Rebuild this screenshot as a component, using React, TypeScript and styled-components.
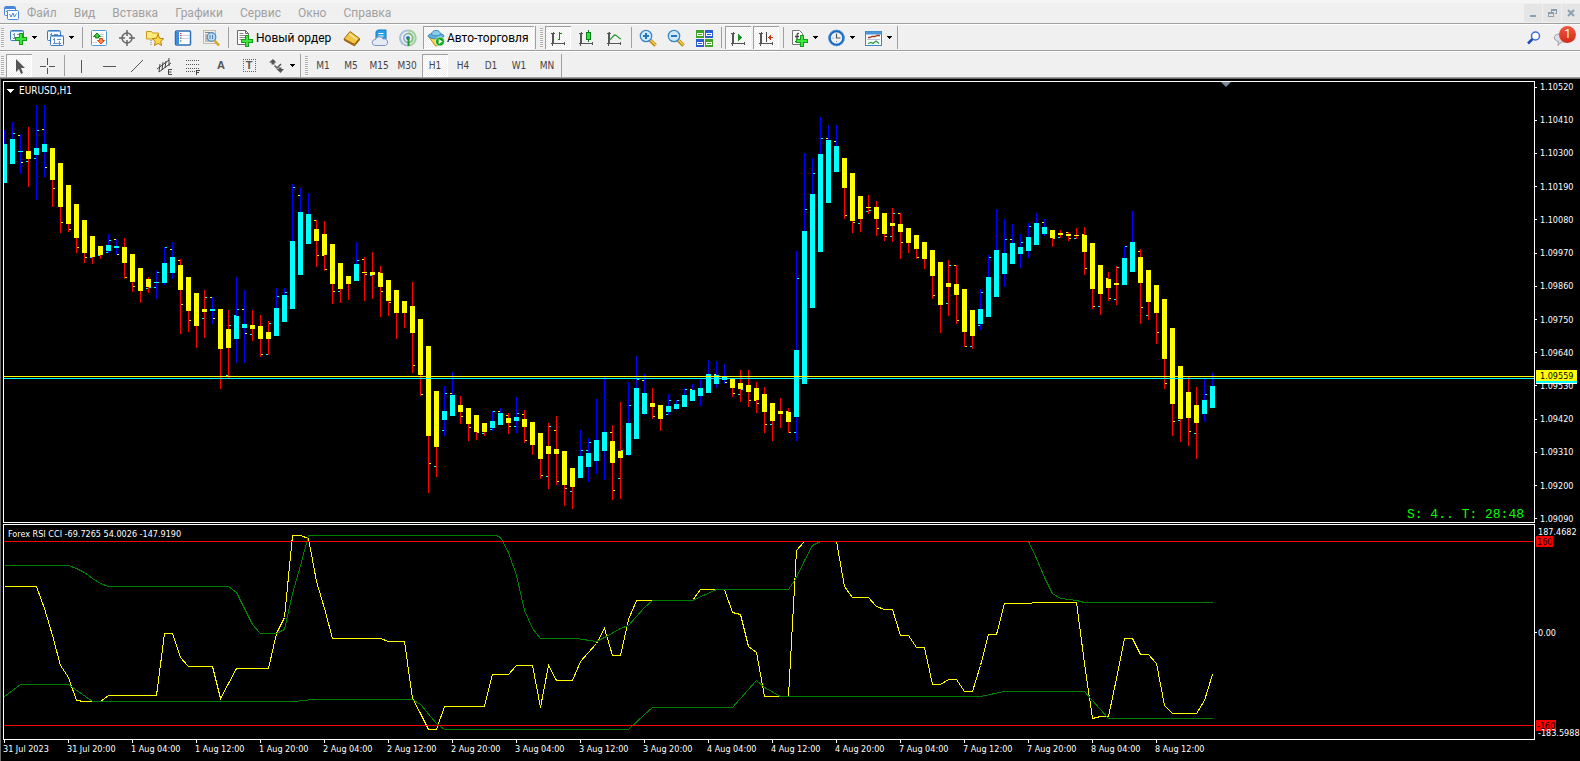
import React from "react";
import styled, { createGlobalStyle, css } from "styled-components";

const UI_FONT = `Roboto, "Open Sans", sans-serif`;
const CHART_FONT = `"DejaVu Sans Condensed", "DejaVu Sans", sans-serif`;

const GlobalStyle = createGlobalStyle`
  * { box-sizing: border-box; }
  body { margin: 0; background: #000; font-family: ${UI_FONT}; font-size: 12px; }
  button { font: inherit; color: inherit; background: none; border: 0; padding: 0; }
  svg { display: block; flex: none; }
  ul, ol { list-style: none; margin: 0; padding: 0; }
`;

/* ---------- shell ---------- */

const Terminal = styled.div`
  display: flex;
  flex-direction: column;
  min-height: 100vh;
  background: #f0f0f0;
`;

const MenuBar = styled.header`
  display: flex;
  align-items: center;
  height: 25px;
  padding: 2px 0 0 4px;
  background: linear-gradient(#f4f4f4 3px, #f0f0f0 3px);
  border-bottom: 1px solid #fff;
  box-shadow: inset 0 -1px 0 #a0a0a0;
`;

const MenuNav = styled.nav`
  display: flex;
  flex: 1;
`;

const MenuItem = styled.button`
  padding: 0 9px 0 8px;
  line-height: 20px;
  color: #a0a0a0;
`;

const WindowButtons = styled.div`
  display: flex;
  gap: 1px;
`;

const WindowButton = styled.button`
  display: grid;
  place-items: center;
  width: 18px;
  height: 18px;
  background: #e5e5e5;
`;

const ToolRow = styled.div<{ $last?: boolean }>`
  display: flex;
  align-items: center;
  height: 27px;
  padding: ${(p) => (p.$last ? "2px 0 1px" : "1px 0 2px")};
  background: #f0f0f0;
  border-bottom: 1px solid ${(p) => (p.$last ? "#696969" : "#fff")};
  box-shadow: inset 0 -1px 0 #a0a0a0;
`;

const ToolGroup = styled.div`
  display: flex;
  align-items: center;
  height: 100%;
  border-right: 1px solid #a0a0a0;
  & + & { padding-left: 3px; }
`;

const Grip = styled.span`
  width: 3px;
  height: 20px;
  margin: 0 1px;
  background: repeating-linear-gradient(#b0b0b0 0 1px, #f6f6f6 1px 2px);
`;

const Divider = styled.span`
  width: 6px;
  height: 21px;
  border-left: 3px solid transparent;
  background: linear-gradient(90deg, #a0a0a0 1px, transparent 1px) padding-box;
`;

const pressedLook = css`
  background: repeating-conic-gradient(#fff 0 25%, #f0f0f0 0 50%) 0 0 / 2px 2px;
  box-shadow: inset 1px 1px 0 #a0a0a0, inset -1px -1px 0 #fff;
`;

const Tool = styled.button`
  display: grid;
  place-items: center;
  width: 26px;
  height: 23px;
  margin: 0 1px;
  font-family: "DejaVu Sans Condensed", sans-serif;
  font-size: 10px;
  color: #444;
  &[aria-pressed="true"] { ${pressedLook} }
`;

const MenuTool = styled.button`
  display: flex;
  align-items: center;
  gap: 4px;
  width: 37px;
  height: 23px;
  padding-left: 5px;
`;

const LabelTool = styled.button<{ $min: number; $pressed?: boolean }>`
  display: flex;
  align-items: center;
  gap: 2px;
  min-width: ${(p) => p.$min}px;
  height: 23px;
  padding: 0 4px;
  margin: 0 1px;
  color: #000;
  white-space: nowrap;
  ${(p) => p.$pressed && pressedLook}
`;

const StatusTools = styled.div`
  display: flex;
  align-items: center;
  gap: 12px;
  margin-left: auto;
  padding-right: 3px;
`;

const PlainTool = styled.button`
  position: relative;
  display: block;
`;

const Count = styled.span`
  position: absolute;
  top: -3px;
  right: 1px;
  width: 17px;
  height: 17px;
  border-radius: 50%;
  background: linear-gradient(#ee5a42, #d62817);
  color: #fff;
  line-height: 17px;
  text-align: center;
`;

/* ---------- chart window ---------- */

const ChartWindow = styled.main`
  display: grid;
  grid-template-columns: minmax(0, 1fr) 45px;
  grid-template-rows: 442px 216px 20px;
  row-gap: 1px;
  padding: 2px 0 0 2px;
  border-left: 1px solid #696969;
  background: #000;
  color: #fff;
  font-family: ${CHART_FONT};
  font-size: 9px;
  line-height: 12px;
`;

const Pane = styled.section`
  position: relative;
  border: 1px solid #fff;
  overflow: hidden;
`;

const PaneTitle = styled.h2<{ $symbol?: boolean }>`
  position: absolute;
  top: 3px;
  left: ${(p) => (p.$symbol ? 3 : 4)}px;
  display: flex;
  align-items: center;
  gap: 5px;
  margin: 0;
  font-size: ${(p) => (p.$symbol ? 10 : 9)}px;
  font-weight: normal;
`;

const ShiftMark = styled.svg`
  position: absolute;
  top: 0;
  left: 1217px;
`;

const Spread = styled.p`
  position: absolute;
  right: 10px;
  bottom: 0;
  margin: 0;
  color: #0f0;
  font: 13px/14px "Liberation Mono", monospace;
  white-space: pre;
`;

const Axis = styled.div`
  position: relative;
  display: flex;
  flex-direction: column;
  justify-content: space-between;
`;

const LevelAxis = styled(Axis)`
  padding: 2px 0 1px;
`;

const PriceList = styled.ol`
  display: flex;
  flex: 1;
  flex-direction: column;
  justify-content: space-between;
  margin: 0 0 -2px;
`;

const tickMark = css`
  &::before {
    content: "";
    width: 2px;
    height: 1px;
    background: #fff;
  }
`;

const Tick = styled.li`
  display: flex;
  align-items: center;
  gap: 3px;
  ${tickMark}
`;

const LevelText = styled.span<{ $ticked?: boolean }>`
  position: relative;
  display: flex;
  align-items: center;
  gap: 1px;
  padding-left: ${(p) => (p.$ticked ? 0 : 3)}px;
  ${(p) => p.$ticked && tickMark}
`;

const Tag = styled.span<{ $top: number; $bg: string; $wide?: boolean }>`
  position: absolute;
  top: ${(p) => p.$top}px;
  left: 1px;
  width: ${(p) => (p.$wide ? "41px" : "auto")};
  padding: 1px ${(p) => (p.$wide ? 4 : 1)}px 0;
  line-height: 10px;
  background: ${(p) => p.$bg};
  color: #000;
`;

const BidTag = styled(Tag)`
  box-shadow: 0 2px 0 #0ff, 0 3px 0 #fff;
`;

const TimeAxis = styled.ol`
  display: flex;
  grid-column: 1 / -1;
  padding-left: 1px;
  margin-top: -1px;
`;

const TimeLabel = styled.li`
  flex: none;
  width: 64px;
  padding-top: 3px;
  white-space: nowrap;
  text-indent: -1px;
  background: linear-gradient(#fff, #fff) 0 0 / 1px 3px no-repeat;
`;

/* ---------- series ---------- */

// up/down, high, low, body top, body bottom, then marks: side + tint + row
type Bar = [0 | 1, number, number, number, number, string?];

const bars: Bar[] = [
  [1, 130, 183, 144, 183], [1, 122, 164, 139, 164, "rc133"], [1, 134, 174, 151, 152, "ly135 ry162"],
  [0, 127, 187, 151, 159, "lc161"], [1, 105, 200, 148, 155, "rc130 lc158"], [1, 105, 177, 144, 152, "ly129 ry167"],
  [0, 148, 207, 148, 180, "ry188"], [0, 163, 233, 163, 207, "ry222"], [0, 185, 232, 185, 224, "ry229"],
  [0, 204, 253, 204, 238, "ry247"], [0, 220, 263, 220, 253, "ry257"], [0, 236, 264, 236, 257, "lc257"],
  [0, 246, 259, 246, 255, "lc255"], [1, 234, 253, 245, 251, "rc240 lc252"], [1, 239, 255, 246, 248, "ly239 ry254"],
  [0, 238, 279, 247, 263, "ry277"], [0, 254, 292, 254, 282, "ry286"], [0, 268, 303, 268, 291],
  [0, 277, 293, 279, 287, "lc288 rc287"], [1, 271, 299, 282, 283, "rc272 lc287"], [1, 247, 285, 263, 283, "rc247"],
  [1, 242, 279, 257, 273, "ly249"], [0, 259, 334, 265, 290, "ly260 ry304"], [0, 277, 332, 277, 311, "ry320"],
  [0, 293, 348, 293, 326], [0, 290, 338, 309, 312, "rc297 lc318"], [1, 297, 324, 309, 311, "ly297 ry318"],
  [0, 309, 389, 309, 349], [0, 310, 378, 329, 348, "rc325 lc375"], [1, 277, 363, 316, 339, "rc309 lc315"],
  [1, 290, 363, 324, 328, "ly309 ry333"], [0, 310, 341, 325, 329, "lc334"], [0, 315, 357, 326, 339, "ry354"],
  [0, 321, 355, 332, 339, "rc323 lc354"], [1, 288, 336, 308, 336, "rc296"], [1, 288, 322, 295, 322, "rc292"],
  [1, 184, 309, 241, 309, "rc187"], [1, 188, 275, 212, 275, "ly195"], [1, 193, 244, 214, 244],
  [0, 220, 267, 229, 241, "ly220 ry255"], [0, 221, 271, 234, 255, "ly255 ry269"], [0, 244, 304, 244, 284, "ry291"],
  [0, 263, 303, 263, 289, "lc291"], [0, 276, 300, 276, 284], [1, 242, 281, 264, 281, "rc260"],
  [0, 257, 301, 272, 273, "ly259 ry274"], [0, 252, 299, 272, 275, "lc275"], [0, 266, 317, 273, 287, "ly272 ry291"],
  [0, 280, 316, 280, 301, "ry302"], [0, 290, 339, 290, 313], [0, 301, 328, 301, 313],
  [0, 282, 373, 306, 333, "ry365"], [0, 319, 396, 319, 375, "ry394"], [0, 346, 493, 346, 436, "ry463"],
  [0, 391, 477, 391, 447, "lc466"], [1, 386, 436, 411, 420, "rc393 lc430"], [1, 372, 416, 395, 416, "ly393"],
  [0, 396, 424, 405, 412, "ry416"], [0, 408, 441, 408, 424, "ry427"], [0, 415, 440, 415, 432, "ry432"],
  [0, 423, 436, 423, 432, "lc433"], [1, 411, 431, 421, 428, "rc411 lc429"], [1, 408, 425, 413, 425, "ly411"],
  [0, 413, 434, 418, 423, "ly415 ry426"], [1, 397, 433, 417, 421, "rc413 lc426"], [0, 410, 443, 419, 427, "ly414 ry440"],
  [0, 422, 455, 422, 445], [0, 433, 479, 433, 459, "ry475"], [0, 423, 489, 446, 454, "rc426 lc476"],
  [0, 416, 485, 449, 454, "ly430 ry481"], [0, 451, 506, 451, 485, "ry488"], [0, 468, 509, 468, 487, "lc491"],
  [1, 430, 478, 456, 478, "rc450"], [1, 438, 482, 453, 467, "lc450 rc442"], [1, 399, 474, 440, 461],
  [1, 377, 480, 432, 451], [0, 425, 500, 441, 463, "ly432 ry490"], [0, 402, 499, 451, 458, "rc450 lc478"],
  [1, 382, 456, 423, 455, "rc405"], [1, 356, 439, 388, 439, "rc379"], [1, 374, 415, 393, 414, "ly380"],
  [0, 388, 419, 403, 407, "ry416"], [0, 405, 431, 405, 419], [1, 394, 415, 406, 412, "rc400 lc414"],
  [1, 400, 410, 404, 409, "rc400"], [1, 388, 407, 395, 407, "rc389"], [1, 384, 401, 390, 401, "ly389"],
  [1, 378, 406, 388, 396], [1, 360, 393, 374, 393], [1, 361, 388, 375, 384, "ly374"],
  [1, 364, 384, 376, 380, "ry382"], [0, 379, 397, 379, 388, "ry393"], [0, 370, 402, 383, 389, "lc394 rc389"],
  [0, 370, 407, 385, 392, "ry400"], [0, 382, 413, 388, 400, "ly400 ry403"], [0, 387, 433, 394, 412, "ry424"],
  [0, 403, 441, 403, 421, "lc424"], [0, 398, 428, 411, 414], [0, 408, 433, 412, 422, "ly411 ry432"],
  [1, 251, 441, 350, 417, "rc278 lc432"], [1, 153, 384, 231, 384, "rc209"], [1, 158, 308, 194, 308, "rc173"],
  [1, 117, 252, 154, 252, "rc138"], [1, 125, 203, 140, 203, "ly138"], [1, 125, 172, 146, 172, "ly141"],
  [0, 158, 219, 158, 188, "ry215"], [0, 173, 233, 173, 221, "ry222"], [0, 196, 232, 196, 219, "lc223"],
  [0, 195, 214, 207, 208, "lc211 rc210"], [0, 201, 236, 207, 219, "ry228"], [0, 213, 241, 213, 234, "ry236"],
  [0, 208, 242, 223, 226, "rc213 lc236"], [0, 213, 259, 224, 232, "ly213 ry242"], [0, 228, 253, 228, 243],
  [0, 235, 259, 235, 249, "ry257"], [0, 242, 269, 242, 259], [0, 250, 299, 250, 276, "ry295"],
  [0, 262, 333, 262, 305], [0, 260, 316, 283, 287, "rc265 lc303"], [0, 265, 324, 284, 295, "ly265 ry320"],
  [0, 289, 347, 289, 332, "ry346"], [0, 310, 349, 310, 336, "lc346"], [1, 289, 330, 309, 324, "rc292 lc325"],
  [1, 255, 317, 277, 317, "rc257"], [1, 209, 297, 250, 297], [1, 219, 287, 253, 274, "rc239"],
  [1, 224, 264, 243, 264, "ly239"], [1, 234, 268, 247, 254, "rc242"], [1, 223, 258, 237, 251, "rc226"],
  [1, 213, 245, 223, 245], [1, 219, 236, 227, 234, "ly222"], [0, 230, 247, 230, 238, "ry238"],
  [0, 230, 238, 233, 235, "lc237"], [0, 232, 241, 234, 236, "ly232 ry238"], [0, 228, 239, 235, 236, "lc238"],
  [0, 227, 275, 235, 252, "ly234 ry268"], [0, 243, 309, 243, 289, "ry306"], [0, 265, 315, 265, 294, "lc306"],
  [0, 272, 301, 279, 288, "ly278 ry298"], [0, 266, 305, 283, 285, "rc267 lc299"], [1, 246, 285, 258, 285, "rc246"],
  [1, 211, 272, 242, 272], [0, 249, 324, 257, 283, "ly251 ry307"], [0, 270, 320, 270, 302, "lc315"],
  [0, 285, 344, 285, 313, "ry332"], [0, 299, 389, 299, 359, "ry383"], [0, 328, 436, 328, 404, "ry421"],
  [0, 366, 442, 366, 419, "lc420"], [0, 377, 446, 392, 418, "ry431"], [0, 387, 459, 405, 423, "lc433"],
  [1, 379, 422, 400, 414, "rc394"], [1, 373, 408, 386, 408],
];

const oscillator =
  "4,586 36,586 44,608 52,635 60,665 68,677 76,700 84,701 100,701 108,695 156,695 164,633 172,633 180,657 188,666 212,666 220,698 228,683 236,668 268,668 276,633 284,617 292,535 300,535 308,538 316,581 324,608 332,638 380,638 388,641 404,641 412,698 420,713 428,729 436,729 444,706 484,706 492,674 508,674 516,665 532,665 540,707 548,665 556,680 572,680 580,661 588,652 596,643 604,628 612,655 620,655 628,619 636,600 692,600 700,589 724,589 732,612 740,614 748,646 756,652 764,696 788,696 796,550 804,541 836,541 844,586 852,597 868,597 876,606 884,609 892,609 900,635 908,635 916,647 924,647 932,684 940,684 948,679 956,679 964,691 972,691 980,665 988,634 996,634 1004,603 1028,603 1036,602 1076,602 1084,663 1092,718 1100,716 1108,716 1116,678 1124,638 1132,638 1140,654 1148,654 1156,663 1164,705 1172,713 1196,713 1204,700 1212,674";

const upperBand =
  "4,565 68,565 76,568 84,572 92,578 100,583 108,586 228,586 236,592 244,608 252,624 260,633 276,633 284,629 292,593 300,565 308,535 496,535 500,537 508,552 516,575 524,610 532,628 540,638 576,638 596,641 604,637 620,628 628,625 644,607 652,600 692,600 716,589 788,589 796,577 804,560 812,545 820,541 1028,541 1036,558 1044,577 1052,593 1060,598 1068,599 1076,600 1084,602 1212,602";

const lowerBand =
  "4,696 20,684 68,684 92,701 294,701 312,699 412,699 420,704 436,723 444,729 628,729 644,714 652,707 732,707 756,680 764,687 780,696 980,696 1004,691 1084,691 1108,718 1212,718";

function Candle({ index, bar }: { index: number; bar: Bar }) {
  const [up, high, low, top, bottom, marks] = bar;
  const x = 4 + index * 8;
  return (
    <g>
      <rect x={x} y={high} width={1} height={low - high} fill={up ? "#00f" : "#f00"} />
      <rect x={x - 2} y={top} width={5} height={bottom - top} fill={up ? "#0ff" : "#ff0"} />
      {marks?.split(" ").map((mark) => (
        <rect
          key={mark}
          x={mark[0] === "l" ? x - 2 : x + 1}
          y={Number(mark.slice(2))}
          width={2}
          height={1}
          fill={mark[1] === "c" ? "#0ff" : "#ff0"}
        />
      ))}
    </g>
  );
}

function PriceChart() {
  return (
    <svg width="100%" height="440" shapeRendering="crispEdges" role="img" aria-label="EURUSD H1">
      <g transform="translate(-4 -82)">
        {bars.map((bar, i) => (
          <Candle key={i} index={i} bar={bar} />
        ))}
      </g>
      <rect y="294" width="100%" height="1" fill="#ff0" />
      <rect y="296" width="100%" height="1" fill="#0ff" />
    </svg>
  );
}

function OscillatorChart() {
  return (
    <svg width="100%" height="214" shapeRendering="crispEdges" role="img" aria-label="Forex RSI CCI">
      <g transform="translate(-3.5 -524.5)" fill="none" strokeWidth="1">
        <polyline points={oscillator} stroke="#ff0" />
        <polyline points={upperBand} stroke="#008000" />
        <polyline points={lowerBand} stroke="#008000" />
      </g>
      <rect y="16" width="100%" height="1" fill="#f00" />
      <rect y="200" width="100%" height="1" fill="#f00" />
    </svg>
  );
}

/* ---------- icons ---------- */

const Svg = ({ children, w = 18, h = 18, crisp }: { children: React.ReactNode; w?: number; h?: number; crisp?: boolean }) => (
  <svg width={w} height={h} viewBox={`0 0 ${w} ${h}`} fill="none" aria-hidden="true" shapeRendering={crisp ? "crispEdges" : "auto"}>
    {children}
  </svg>
);

const Plus = ({ x, y }: { x: number; y: number }) => (
  <g transform={`translate(${x} ${y})`}>
    <path d="M4 0h4v4h4v4H8v4H4V8H0V4h4z" fill="#12a01c" />
    <path d="M5 1h2v4h4v2H7v4H5V7H1V5h4z" fill="#3ee63e" />
  </g>
);

const Caret = () => (
  <Svg w={6} h={4} crisp>
    <path d="M0 0h5v1h-1v1h-1v1h-1v-1h-1v-1h-1z" fill="#000" />
  </Svg>
);

const AppIcon = () => (
  <Svg w={15} h={15}>
    <rect x=".5" y=".5" width="11" height="9" rx="1" fill="#fff" stroke="#4a86d8" />
    <path d="M1 2h10" stroke="#4a86d8" strokeWidth="2" />
    <path d="M2 6l1.500-2L5 6.500" stroke="#4a86d8" />
    <rect x="3.500" y="4.500" width="11" height="9" rx="1" fill="#fff" stroke="#4a86d8" />
    <path d="M5.500 8l1.500 3 2-4 1.500 4 2-3.500" stroke="#4a86d8" />
  </Svg>
);

const Win = ({ x, y }: { x: number; y: number }) => (
  <g transform={`translate(${x} ${y})`}>
    <rect x=".5" y=".5" width="13" height="10" rx="1" fill="#f4f9ff" stroke="#3a78bd" />
    <path d="M1 1.500h12" stroke="#7fb2e6" />
    <path d="M3 4.500h2M4.500 3v6M3 8.500h8M9.500 6v4M7 4.500h4" stroke="#6f8fb4" />
  </g>
);

const NewChartIcon = () => (
  <Svg>
    <Win x={0} y={1} />
    <Plus x={5} y={4} />
  </Svg>
);

const ProfilesIcon = () => (
  <Svg>
    <Win x={0} y={1} />
    <Win x={3} y={6} />
  </Svg>
);

const MarketIcon = () => (
  <Svg>
    <rect x="1.500" y="1.500" width="15" height="15" rx="1" fill="#fff" stroke="#4f9ad2" />
    <path d="M10 5.500h4M3 13.500h4M11 7.500h3" stroke="#c4d3e2" />
    <path d="M3.500 7.500L7 4l3.500 3.500h-2V9h-3V7.500z" fill="#3fce3f" stroke="#0c8212" />
    <path d="M7.500 11.500L11 15l3.500-3.500h-2V9.500h-3v2z" fill="#ff8a55" stroke="#d04a14" />
  </Svg>
);

const TargetIcon = () => (
  <Svg>
    <circle cx="9" cy="9" r="5" stroke="#666" strokeWidth="1.500" />
    <path d="M9 1v6M9 11v6M1 9h6M11 9h6" stroke="#666" strokeWidth="1.500" />
  </Svg>
);

const FavoritesIcon = () => (
  <Svg>
    <path d="M.5 2.500h5l1 1.500h6v6h-12z" fill="#ffe97a" stroke="#c89b1c" />
    <path d="M5 11v6" stroke="#777" strokeDasharray="1 1" />
    <path d="M12 5.500l1.700 3.800 4 .4-3 2.700.9 4.100-3.600-2.100-3.600 2.100.9-4.100-3-2.700 4-.4z" fill="#ffd84a" stroke="#b9820c" />
  </Svg>
);

const TerminalIcon = () => (
  <Svg>
    <rect x="1.500" y="2" width="15" height="14" rx="1" fill="#fff" stroke="#2c6fb8" strokeWidth="1.500" />
    <path d="M3.500 3v12" stroke="#3b8ede" strokeWidth="3" />
    <path d="M7 6.500h8M7 9.500h8" stroke="#d0d0d8" />
    <path d="M6 4.500h1.500M6 6.500h1.500" stroke="#e0392b" />
    <path d="M6 9h1.500M6 12h1.500" stroke="#444" />
  </Svg>
);

const TesterIcon = () => (
  <Svg>
    <rect x="1.500" y="1.500" width="12" height="13" fill="#f4f1ea" stroke="#c2b9a6" />
    <path d="M3 3.500h8M4 5v6M11 4v4M3 12h8" stroke="#888" />
    <circle cx="9.500" cy="8" r="4.300" fill="#b5dbf5" fillOpacity=".85" stroke="#5590bd" strokeWidth="1.300" />
    <path d="M8 6v4M10.500 6v4" stroke="#4a7fb0" />
    <path d="M12.500 11.500l4.500 5" stroke="#d9a520" strokeWidth="2.500" />
  </Svg>
);

const OrderIcon = () => (
  <Svg>
    <path d="M1.500 1.500h8l3 3v11h-11z" fill="#fff" stroke="#6a6a6a" />
    <path d="M9.500 1.500v3h3" stroke="#6a6a6a" />
    <path d="M3.500 4.500h4M3.500 6.500h7M3.500 8.500h7M3.500 10.500h4" stroke="#888" />
    <Plus x={5} y={6} />
  </Svg>
);

const GoldIcon = () => (
  <Svg>
    <path d="M1 10l6-7.500 9.500 7-5 6z" fill="#f3c648" stroke="#a06a08" strokeLinejoin="round" />
    <path d="M1 10l10.500 5.500 5-6v1.500l-5 6L1.500 11.500z" fill="#b87410" stroke="#8a5606" strokeWidth=".7" />
    <path d="M6.500 5l7.500 5.500" stroke="#ffeaa6" strokeWidth="1.500" />
  </Svg>
);

const CloudIcon = () => (
  <Svg>
    <path d="M5 2.500L7 1h8v9l-2 1H5z" fill="#2ba0e8" stroke="#1478c0" />
    <path d="M7.500 4.500h5M7.500 7h5" stroke="#fff" />
    <path d="M4 16.500a3 3 0 0 1 .5-6 4 4 0 0 1 7.500-.5 3.200 3.200 0 0 1 2.500 6.500z" fill="#e4ebf6" stroke="#7d98c5" />
  </Svg>
);

const SignalIcon = () => (
  <Svg>
    <path d="M9 1.500a7.500 7.500 0 1 0 2 14.600" stroke="#a9c2d8" strokeWidth="2" />
    <path d="M9 4.500a4.500 4.500 0 1 0 .5 9" stroke="#86a9cc" strokeWidth="1.500" />
    <path d="M9 1.500a7.500 7.500 0 0 1 .5 15" stroke="#a0cfa0" strokeWidth="2" />
    <path d="M9 4.500a4.500 4.500 0 0 1 .5 9" stroke="#7cc07c" strokeWidth="2" />
    <circle cx="9" cy="9" r="2" fill="#2e78b8" />
    <path d="M9.500 9v8" stroke="#239a2a" strokeWidth="2" />
  </Svg>
);

const AutoIcon = () => (
  <Svg>
    <path d="M2 8l6 8.500 2 .5 6-9z" fill="#f8d654" stroke="#c0921a" />
    <ellipse cx="9" cy="7" rx="8" ry="2.800" fill="#5fb0dc" stroke="#3a8ab8" />
    <path d="M4.500 5.500c0-5.500 9-5.500 9 0-2 1.800-7 1.800-9 0z" fill="#8accec" stroke="#3a8ab8" />
    <circle cx="13" cy="12.500" r="4.500" fill="#12a81f" stroke="#fff" strokeWidth=".7" />
    <path d="M11.700 10v5l3.800-2.500z" fill="#fff" />
  </Svg>
);

const AxesGlyph = () => (
  <path d="M4 3h1v11h11v1h-12v2h-1v-2h-1v-1h1v-9h-1v-1h1zM5 4h1v1h-1zM15 13h1v1h-1zM15 15h1v1h-1z" fill="#555" />
);

const BarChartIcon = () => (
  <Svg crisp>
    <AxesGlyph />
    <path d="M10 3h1v1h2v1h-2v6h-2v-1h1z" fill="#0a8a16" />
  </Svg>
);

const CandleChartIcon = () => (
  <Svg crisp>
    <AxesGlyph />
    <rect x="11" y="1" width="1" height="12" fill="#0a7a14" />
    <rect x="9" y="3" width="5" height="8" fill="#0a7a14" />
    <rect x="10" y="4" width="3" height="6" fill="#35e045" />
  </Svg>
);

const LineChartIcon = () => (
  <Svg>
    <AxesGlyph />
    <path d="M4 11c3-1 4-5 6-5s3 3 6 4" stroke="#2c9a38" strokeWidth="1.300" />
  </Svg>
);

const ZoomIcon = ({ plus }: { plus?: boolean }) => (
  <Svg>
    <path d="M11 11l5.500 5.500" stroke="#b8860b" strokeWidth="3.500" />
    <path d="M11.500 11l5 5" stroke="#f4d25a" strokeWidth="1.500" />
    <circle cx="7" cy="7" r="5.700" fill="#cfe9fb" stroke="#3d86c6" strokeWidth="1.300" />
    <path d={plus ? "M4 7h6M7 4v6" : "M4 7h6"} stroke="#2a74b8" strokeWidth="2" />
  </Svg>
);

const TilesIcon = () => (
  <Svg w={17} crisp>
    {[
      [0, 1, "#3fa32a"],
      [9, 1, "#2b5fd0"],
      [0, 10, "#2b5fd0"],
      [9, 10, "#3fa32a"],
    ].map(([x, y, c]) => (
      <g key={`${x}-${y}`}>
        <rect x={x as number} y={y as number} width="8" height="8" fill={c as string} />
        <rect x={(x as number) + 1} y={(y as number) + 3} width="6" height="3" fill="#fff" />
        <rect x={(x as number) + 2} y={(y as number) + 4} width="4" height="1" fill={c as string} />
      </g>
    ))}
  </Svg>
);

const ScrollIcon = () => (
  <Svg crisp>
    <AxesGlyph />
    <path d="M9 5h1v1h1v1h1v1h1v1h-1v1h-1v1h-1v1h-1z" fill="#11901b" />
  </Svg>
);

const ShiftIcon = () => (
  <Svg crisp>
    <AxesGlyph />
    <path d="M9 3h1v10h-1z" fill="#444" />
    <path d="M11 8h1v-1h1v-1h1v2h2v1h-2v2h-1v-1h-1v-1h-1z" fill="#c43a12" />
  </Svg>
);

const IndicatorIcon = () => (
  <Svg>
    <path d="M1.500 1.500h7l3 3v11h-10z" fill="#fff" stroke="#777" />
    <path d="M8 4.500c-2-.5-2 1-2 3v3c0 2-.5 2.500-2 2M4 7.500h4" stroke="#444" strokeWidth="1.300" />
    <Plus x={5} y={6} />
  </Svg>
);

const ClockIcon = () => (
  <Svg>
    <circle cx="8.500" cy="9" r="7" fill="#eef2f4" stroke="#1866c0" strokeWidth="2.500" />
    <circle cx="8.500" cy="9" r="7.800" stroke="#6fb0ee" strokeWidth=".6" />
    <path d="M8.500 4.500V9h4" stroke="#555" strokeWidth="1.200" />
    <path d="M4.500 9h1M8.500 13v-1" stroke="#777" />
  </Svg>
);

const TemplateIcon = () => (
  <Svg>
    <rect x=".5" y="2.500" width="16" height="14" fill="#f5faff" stroke="#3a86cc" />
    <path d="M1 4h15" stroke="#4d98dc" strokeWidth="3" />
    <path d="M2 10.500h13" stroke="#b8c8d8" />
    <path d="M3 8.500h2l2-1h3l2-1h3" stroke="#a03c22" strokeWidth="1.300" />
    <path d="M3 14.500l3-1 2 1 3-2.500 3 2.500" stroke="#2c9a38" strokeWidth="1.300" />
  </Svg>
);

const SearchIcon = () => (
  <Svg w={14} h={14}>
    <circle cx="8.500" cy="5" r="4" fill="#fff" stroke="#3b6fd8" strokeWidth="1.500" />
    <path d="M5.500 8L1 12.500" stroke="#1c4cb8" strokeWidth="2.500" />
  </Svg>
);

const BubbleIcon = () => (
  <Svg w={24} h={17}>
    <path d="M5 5h9a4 4 0 0 1 0 8H8.500L5 16.500l.5-4C0 11.500 0 6 5 5z" fill="#dcdce4" stroke="#9c9ca6" />
  </Svg>
);

const CursorIcon = () => (
  <Svg>
    <path d="M6 2v13l3-3 2 5 2-1-2-5h4z" fill="#555" />
  </Svg>
);

const CrosshairIcon = () => (
  <Svg crisp>
    <path d="M9 1h1v7h-1zM9 11h1v6h-1zM2 9h6v1h-6zM11 9h6v1h-6z" fill="#555" />
  </Svg>
);

const StrokeIcon = ({ d }: { d: string }) => (
  <Svg>
    <path d={d} stroke="#555" strokeWidth="1" />
  </Svg>
);

const ChannelIcon = () => (
  <Svg>
    <path d="M1 12L13 3M3 15L15 6M4 7l-1 8M7 5L6 13M10 4L9 11M13 1v8" stroke="#444" />
    <path d="M16 12.500h-3.500v5H16M12.500 15h3" stroke="#444" />
  </Svg>
);

const FiboIcon = () => (
  <Svg crisp>
    <path d="M2 3.500h14M2 7.500h14M2 11.500h14M2 14.500h9" stroke="#555" strokeDasharray="1 1" />
    <path d="M12.500 18v-5M12 13.500h4M12 15.500h3" stroke="#444" />
  </Svg>
);

const ArrowsIcon = () => (
  <Svg>
    <path d="M1 5.500L5 2l3.500 3.500H6.500v2h-3v-2z" fill="#555" />
    <path d="M6.500 8.500L9 11l4-4" stroke="#555" strokeWidth="1.500" />
    <path d="M8.500 12h2v-1.500h3V12H16l-3.500 4z" fill="#555" />
  </Svg>
);

const LetterFrame = styled.span<{ $framed?: boolean }>`
  display: grid;
  place-items: center;
  width: 13px;
  height: 13px;
  border: ${(p) => (p.$framed ? "1px dotted #666" : "0")};
  font: bold 11px/11px "Liberation Sans", sans-serif;
  color: #555;
`;

/* ---------- content ---------- */

const menu = ["Файл", "Вид", "Вставка", "Графики", "Сервис", "Окно", "Справка"];
const periods = ["M1", "M5", "M15", "M30", "H1", "H4", "D1", "W1", "MN"];
const prices = [
  "1.10520", "1.10410", "1.10300", "1.10190", "1.10080", "1.09970", "1.09860",
  "1.09750", "1.09640", "1.09530", "1.09420", "1.09310", "1.09200", "1.09090",
];
const times = [
  "31 Jul 2023", "31 Jul 20:00", "1 Aug 04:00", "1 Aug 12:00", "1 Aug 20:00", "2 Aug 04:00", "2 Aug 12:00",
  "2 Aug 20:00", "3 Aug 04:00", "3 Aug 12:00", "3 Aug 20:00", "4 Aug 04:00", "4 Aug 12:00", "4 Aug 20:00",
  "7 Aug 04:00", "7 Aug 12:00", "7 Aug 20:00", "8 Aug 04:00", "8 Aug 12:00",
];

function StandardBar() {
  return (
    <ToolRow>
      <ToolGroup>
        <Grip />
        <MenuTool aria-label="Новый график"><NewChartIcon /><Caret /></MenuTool>
        <MenuTool aria-label="Профили"><ProfilesIcon /><Caret /></MenuTool>
        <Divider />
        <Tool aria-label="Обзор рынка"><MarketIcon /></Tool>
        <Tool aria-label="Окно данных"><TargetIcon /></Tool>
        <Tool aria-label="Навигатор"><FavoritesIcon /></Tool>
        <Tool aria-label="Терминал"><TerminalIcon /></Tool>
        <Tool aria-label="Тестер стратегий"><TesterIcon /></Tool>
        <Divider />
        <LabelTool $min={105}><OrderIcon />Новый ордер</LabelTool>
        <Tool aria-label="Редактор"><GoldIcon /></Tool>
        <Tool aria-label="Хостинг"><CloudIcon /></Tool>
        <Tool aria-label="Сигналы"><SignalIcon /></Tool>
        <LabelTool $min={111} $pressed aria-pressed="true"><AutoIcon />Авто-торговля</LabelTool>
      </ToolGroup>
      <ToolGroup>
        <Grip />
        <Tool aria-label="Бары" aria-pressed="true"><BarChartIcon /></Tool>
        <Tool aria-label="Свечи"><CandleChartIcon /></Tool>
        <Tool aria-label="Линия"><LineChartIcon /></Tool>
        <Divider />
        <Tool aria-label="Увеличить"><ZoomIcon plus /></Tool>
        <Tool aria-label="Уменьшить"><ZoomIcon /></Tool>
        <Tool aria-label="Мозаика"><TilesIcon /></Tool>
        <Divider />
        <Tool aria-label="Автопрокрутка" aria-pressed="true"><ScrollIcon /></Tool>
        <Tool aria-label="Сдвиг графика" aria-pressed="true"><ShiftIcon /></Tool>
        <Divider />
        <MenuTool aria-label="Индикаторы"><IndicatorIcon /><Caret /></MenuTool>
        <MenuTool aria-label="Периоды"><ClockIcon /><Caret /></MenuTool>
        <MenuTool aria-label="Шаблоны"><TemplateIcon /><Caret /></MenuTool>
      </ToolGroup>
      <StatusTools>
        <PlainTool aria-label="Поиск"><SearchIcon /></PlainTool>
        <PlainTool aria-label="Уведомления"><BubbleIcon /><Count>1</Count></PlainTool>
      </StatusTools>
    </ToolRow>
  );
}

function DrawingBar() {
  return (
    <ToolRow $last>
      <ToolGroup>
        <Grip />
        <Tool aria-label="Курсор" aria-pressed="true"><CursorIcon /></Tool>
        <Tool aria-label="Перекрестие"><CrosshairIcon /></Tool>
        <Divider />
        <Tool aria-label="Вертикальная линия"><StrokeIcon d="M9.500 3v13" /></Tool>
        <Tool aria-label="Горизонтальная линия"><StrokeIcon d="M3 9.500h13" /></Tool>
        <Tool aria-label="Трендовая линия"><StrokeIcon d="M3 15L15 3" /></Tool>
        <Tool aria-label="Канал"><ChannelIcon /></Tool>
        <Tool aria-label="Фибоначчи"><FiboIcon /></Tool>
        <Tool><LetterFrame>A</LetterFrame></Tool>
        <Tool><LetterFrame $framed>T</LetterFrame></Tool>
        <MenuTool aria-label="Стрелки"><ArrowsIcon /><Caret /></MenuTool>
      </ToolGroup>
      <ToolGroup>
        <Grip />
        {periods.map((period) => (
          <Tool key={period} aria-pressed={period === "H1"}>{period}</Tool>
        ))}
      </ToolGroup>
    </ToolRow>
  );
}

export default function App() {
  return (
    <Terminal>
      <GlobalStyle />
      <MenuBar>
        <AppIcon />
        <MenuNav>
          {menu.map((item) => (
            <MenuItem key={item}>{item}</MenuItem>
          ))}
        </MenuNav>
        <WindowButtons>
          <WindowButton aria-label="Свернуть">
            <Svg w={10} h={10} crisp><path d="M2 7h6v2h-6z" fill="#8c9fae" /></Svg>
          </WindowButton>
          <WindowButton aria-label="Восстановить">
            <Svg w={10} h={10} crisp>
              <path d="M4 1h6v5h-2v-1h1v-2h-4v1h-1zM1 4h6v5h-6zM2 6v2h4v-2z" fill="#8c9fae" fillRule="evenodd" />
            </Svg>
          </WindowButton>
          <WindowButton aria-label="Закрыть">
            <Svg w={10} h={10}><path d="M2 2l6 6M8 2l-6 6" stroke="#8c9fae" strokeWidth="2" /></Svg>
          </WindowButton>
        </WindowButtons>
      </MenuBar>
      <StandardBar />
      <DrawingBar />
      <ChartWindow>
        <Pane>
          <PriceChart />
          <PaneTitle $symbol>
            <Svg w={7} h={4} crisp><path d="M0 0h7v1h-1v1h-1v1h-1v1h-1v-1h-1v-1h-1v-1h-1z" fill="#fff" /></Svg>
            EURUSD,H1
          </PaneTitle>
          <ShiftMark width="10" height="5" viewBox="0 0 10 5" aria-hidden="true"><path d="M0 0h10L5 5z" fill="#778899" /></ShiftMark>
          <Spread>S: 4.. T: 28:48</Spread>
        </Pane>
        <Axis>
          <PriceList>
            {prices.map((price) => (
              <Tick key={price}>{price}</Tick>
            ))}
          </PriceList>
          <BidTag $top={289} $bg="#ff0" $wide>1.09559</BidTag>
        </Axis>
        <Pane>
          <OscillatorChart />
          <PaneTitle>Forex RSI CCI -69.7265 54.0026 -147.9190</PaneTitle>
        </Pane>
        <LevelAxis>
          <Tag $top={12} $bg="#f00">160</Tag>
          <Tag $top={196} $bg="#f00">-160</Tag>
          <LevelText>187.4682</LevelText>
          <LevelText $ticked>0.00</LevelText>
          <LevelText>-183.5988</LevelText>
        </LevelAxis>
        <TimeAxis>
          {times.map((time) => (
            <TimeLabel key={time}>{time}</TimeLabel>
          ))}
        </TimeAxis>
      </ChartWindow>
    </Terminal>
  );
}
